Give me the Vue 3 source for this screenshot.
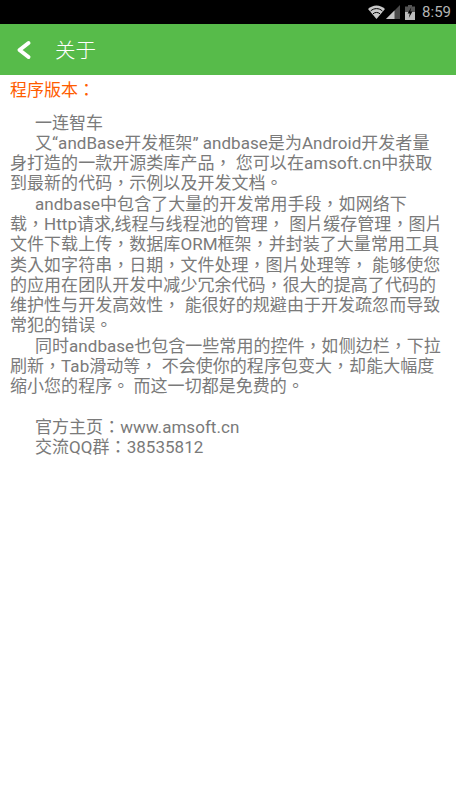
<script setup>
const lines = [
  { t: '一连智车', i: true },
  { t: '又“andBase开发框架” andbase是为Android开发者量', i: true },
  { t: '身打造的一款开源类库产品， 您可以在amsoft.cn中获取' },
  { t: '到最新的代码，示例以及开发文档。' },
  { t: 'andbase中包含了大量的开发常用手段，如网络下', i: true },
  { t: '载，Http请求,线程与线程池的管理， 图片缓存管理，图片' },
  { t: '文件下载上传，数据库ORM框架，并封装了大量常用工具' },
  { t: '类入如字符串，日期，文件处理，图片处理等， 能够使您' },
  { t: '的应用在团队开发中减少冗余代码，很大的提高了代码的' },
  { t: '维护性与开发高效性， 能很好的规避由于开发疏忽而导致' },
  { t: '常犯的错误。' },
  { t: '同时andbase也包含一些常用的控件，如侧边栏，下拉', i: true },
  { t: '刷新，Tab滑动等， 不会使你的程序包变大，却能大幅度' },
  { t: '缩小您的程序。 而这一切都是免费的。' },
  { t: '\u00a0' },
  { t: '官方主页：www.amsoft.cn', i: true },
  { t: '交流QQ群：38535812', i: true }
]
</script>

<template>
  <div class="page">
    <div class="status">
      <svg class="wifi" width="17" height="14" viewBox="0 0 17 14">
        <path d="M0 4 C4.7 -0.8 12.3 -0.8 17 4 L8.5 14 Z" fill="#c8c8c8" />
        <path d="M2.6 6 C6 2.8 11 2.8 14.4 6" fill="none" stroke="#000" stroke-width="1" />
        <path d="M5 8.8 C7 7 10 7 12 8.8" fill="none" stroke="#000" stroke-width="1" />
      </svg>
      <svg class="signal" width="14" height="14" viewBox="0 0 14 14">
        <path d="M14 0 V14 H0 Z" fill="#4a4a4a" />
        <path d="M8.5 5.5 V14 H0 Z" fill="#c4c4c4" />
      </svg>
      <svg class="battery" width="10" height="15" viewBox="0 0 10 15">
        <path d="M3 0 H7 V1.5 H10 V15 H0 V1.5 H3 Z" fill="#555" />
        <path d="M0 7 H10 V15 H0 Z" fill="#bdbdbd" />
        <path d="M6.2 2.5 L2.6 8.6 H4.8 L3.8 13 L7.4 6.6 H5.2 Z" fill="#000" />
      </svg>
      <span class="time">8:59</span>
    </div>
    <header class="bar">
      <svg class="back" width="16" height="20" viewBox="0 0 16 20">
        <path d="M12.5 3 L3.5 10 L12.5 17" fill="none" stroke="#fff" stroke-width="4" stroke-linecap="round" stroke-linejoin="round" />
      </svg>
      <span class="title">关于</span>
    </header>
    <main class="content">
      <div class="version">程序版本：</div>
      <div class="body">
        <div v-for="(l, n) in lines" :key="n" :class="['line', { indent: l.i }]">{{ l.t }}</div>
      </div>
    </main>
  </div>
</template>

<style scoped>
.page {
  width: 456px;
  height: 811px;
  background: #fff;
  overflow: hidden;
  font-family: Roboto, "Noto Sans CJK TC", sans-serif;
}
.status {
  height: 24px;
  background: #000;
  display: flex;
  align-items: center;
  justify-content: flex-end;
  padding-right: 5px;
  box-sizing: border-box;
}
.wifi { margin-right: 1px; }
.signal { margin-right: 5px; }
.battery { margin-right: 7px; }
.time {
  color: #b4b4b4;
  font-size: 15px;
}
.bar {
  height: 51px;
  background: #57bb4a;
  display: flex;
  align-items: center;
  padding-left: 16px;
}
.back { margin-right: 23px; }
.title {
  color: #fff;
  font-size: 20.5px;
  font-weight: 300;
  padding-bottom: 2px;
}
.content { padding: 5px 0 0 10px; }
.version {
  color: #ff5c00;
  font-size: 17px;
  line-height: 20px;
}
.body {
  margin-top: 12.5px;
  color: #7a7a7a;
  font-size: 17px;
  line-height: 20.3px;
  letter-spacing: 0.04px;
}
.line { white-space: nowrap; }
.indent { padding-left: 25px; }
</style>
